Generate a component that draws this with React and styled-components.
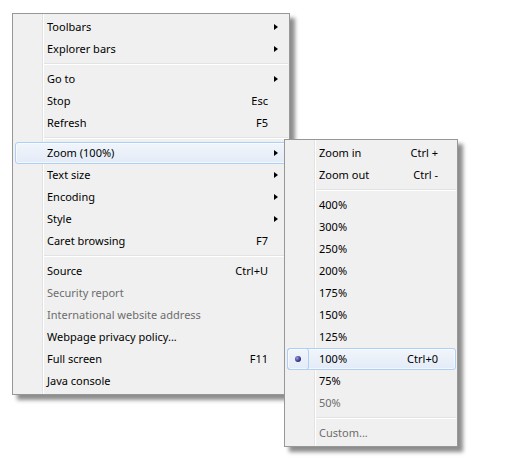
import styled, { createGlobalStyle, css } from 'styled-components'

const GlobalStyle = createGlobalStyle`
  html, body {
    margin: 0;
    background: #fff;
  }
  body {
    font-family: "Noto Sans", "Open Sans", "Liberation Sans", sans-serif;
    font-size: 11px;
    color: #000;
  }
`

const Stage = styled.div`
  padding: 13px 0 0 12px;
  width: 506px;
  height: 473px;
  box-sizing: border-box;
  position: relative;
`

const Menu = styled.div`
  position: ${p => (p.$flyout ? 'absolute' : 'relative')};
  ${p => p.$flyout && css`
    top: ${p.$top}px;
    left: ${p.$left}px;
    z-index: 2;
  `}
  width: ${p => p.$width}px;
  box-sizing: border-box;
  padding: 2px 0;
  background: #f0f0f0;
  border: 1px solid #979797;
  box-shadow: 5px 5px 4px rgba(0, 0, 0, 0.45);

  &::before {
    content: '';
    position: absolute;
    top: 0;
    bottom: 0;
    left: 29px;
    width: 1px;
    background: #e2e3e3;
    border-right: 1px solid #fff;
  }
`

const Item = styled.div`
  position: relative;
  z-index: 1;
  display: flex;
  align-items: center;
  height: 22px;
  box-sizing: border-box;
  margin: 0 1px 0 2px;
  padding: 0 ${p => (p.$arrows ? 0 : 17)}px 0 31px;
  line-height: 20px;
  border: 1px solid transparent;
  border-radius: 3px;
  color: ${p => (p.$disabled ? '#6d6d6d' : '#000')};
  white-space: nowrap;

  ${p => p.$active && css`
    border-color: #aecff7;
    background: linear-gradient(#f1f5fb, #e3ebf7);
    box-shadow: inset 0 0 0 1px rgba(255, 255, 255, 0.6);
  `}
`

const Label = styled.span`
  flex: 1;
`

const Shortcut = styled.span`
  text-align: right;
`

const ArrowCell = styled.span`
  width: 19px;
  height: 7px;
  display: flex;
  padding-left: 6px;
  box-sizing: border-box;
`

const Arrow = styled.span`
  width: 0;
  height: 0;
  border-top: 3.5px solid transparent;
  border-bottom: 3.5px solid transparent;
  border-left: 4px solid #000;
`

const CheckBox = styled.span`
  position: absolute;
  left: -1px;
  top: -1px;
  width: 22px;
  height: 22px;
  box-sizing: border-box;
  border: 1px solid #aecff7;
  border-radius: 3px;
  display: flex;
  align-items: center;
  justify-content: center;
`

const Bullet = styled.span`
  width: 6px;
  height: 6px;
  border-radius: 50%;
  background: radial-gradient(circle at 35% 35%, #9c9ce0, #34348a 60%, #1f1f60);
`

const Separator = styled.div`
  height: 8px;
  margin: 0 1px 0 30px;
  display: flex;
  flex-direction: column;
  justify-content: center;

  &::before {
    content: '';
    height: 1px;
    background: #e2e3e3;
    border-bottom: 1px solid #fff;
  }
`

const mainItems = [
  { label: 'Toolbars', arrow: true },
  { label: 'Explorer bars', arrow: true },
  'sep',
  { label: 'Go to', arrow: true },
  { label: 'Stop', shortcut: 'Esc' },
  { label: 'Refresh', shortcut: 'F5' },
  'sep',
  { label: 'Zoom (100%)', arrow: true, active: true },
  { label: 'Text size', arrow: true },
  { label: 'Encoding', arrow: true },
  { label: 'Style', arrow: true },
  { label: 'Caret browsing', shortcut: 'F7' },
  'sep',
  { label: 'Source', shortcut: 'Ctrl+U' },
  { label: 'Security report', disabled: true },
  { label: 'International website address', disabled: true },
  { label: 'Webpage privacy policy...' },
  { label: 'Full screen', shortcut: 'F11' },
  { label: 'Java console' },
]

const zoomItems = [
  { label: 'Zoom in', shortcut: 'Ctrl +' },
  { label: 'Zoom out', shortcut: 'Ctrl -' },
  'sep',
  { label: '400%' },
  { label: '300%' },
  { label: '250%' },
  { label: '200%' },
  { label: '175%' },
  { label: '150%' },
  { label: '125%' },
  { label: '100%', shortcut: 'Ctrl+0', active: true, checked: true },
  { label: '75%' },
  { label: '50%', disabled: true },
  'sep',
  { label: 'Custom...', disabled: true },
]

function MenuList({ items, arrows }) {
  return items.map((it, i) =>
    it === 'sep' ? (
      <Separator key={i} />
    ) : (
      <Item key={i} $arrows={arrows} $active={it.active} $disabled={it.disabled}>
        {it.checked && (
          <CheckBox>
            <Bullet />
          </CheckBox>
        )}
        <Label>{it.label}</Label>
        {it.shortcut && <Shortcut>{it.shortcut}</Shortcut>}
        {arrows && <ArrowCell>{it.arrow && <Arrow />}</ArrowCell>}
      </Item>
    )
  )
}

export default function App() {
  return (
    <Stage>
      <GlobalStyle />
      <Menu $width={278}>
        <MenuList items={mainItems} arrows />
      </Menu>
      <Menu $flyout $top={139} $left={284} $width={174}>
        <MenuList items={zoomItems} />
      </Menu>
    </Stage>
  )
}
